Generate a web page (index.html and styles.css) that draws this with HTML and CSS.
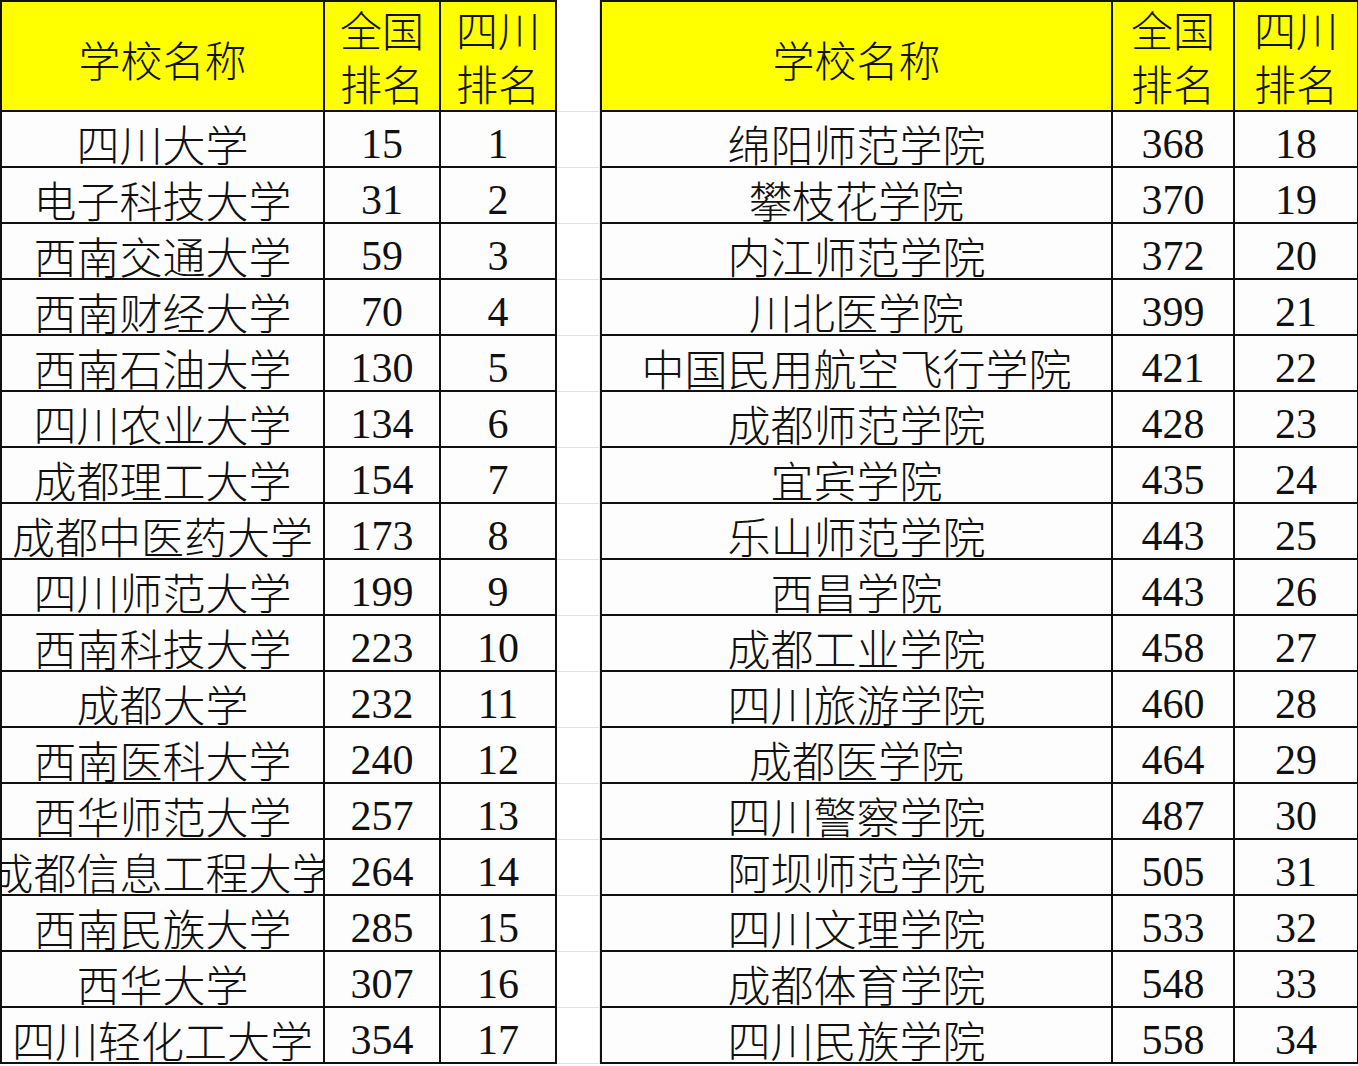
FILE: index.html
```html
<!DOCTYPE html>
<html lang="zh-CN">
<head>
<meta charset="utf-8">
<title>四川高校排名</title>
<link rel="stylesheet" href="styles.css">
</head>
<body>
<div class="page">
  <div class="sheet left">
    <div class="cell head name">学校名称</div>
    <div class="cell head two">全国<br>排名</div>
    <div class="cell head two">四川<br>排名</div>

    <div class="cell name">四川大学</div><div class="cell num">15</div><div class="cell num">1</div>
    <div class="cell name">电子科技大学</div><div class="cell num">31</div><div class="cell num">2</div>
    <div class="cell name">西南交通大学</div><div class="cell num">59</div><div class="cell num">3</div>
    <div class="cell name">西南财经大学</div><div class="cell num">70</div><div class="cell num">4</div>
    <div class="cell name">西南石油大学</div><div class="cell num">130</div><div class="cell num">5</div>
    <div class="cell name">四川农业大学</div><div class="cell num">134</div><div class="cell num">6</div>
    <div class="cell name">成都理工大学</div><div class="cell num">154</div><div class="cell num">7</div>
    <div class="cell name">成都中医药大学</div><div class="cell num">173</div><div class="cell num">8</div>
    <div class="cell name">四川师范大学</div><div class="cell num">199</div><div class="cell num">9</div>
    <div class="cell name">西南科技大学</div><div class="cell num">223</div><div class="cell num">10</div>
    <div class="cell name">成都大学</div><div class="cell num">232</div><div class="cell num">11</div>
    <div class="cell name">西南医科大学</div><div class="cell num">240</div><div class="cell num">12</div>
    <div class="cell name">西华师范大学</div><div class="cell num">257</div><div class="cell num">13</div>
    <div class="cell name clip">成都信息工程大学</div><div class="cell num">264</div><div class="cell num">14</div>
    <div class="cell name">西南民族大学</div><div class="cell num">285</div><div class="cell num">15</div>
    <div class="cell name">西华大学</div><div class="cell num">307</div><div class="cell num">16</div>
    <div class="cell name">四川轻化工大学</div><div class="cell num">354</div><div class="cell num">17</div>
  </div>

  <div class="gap">
    <div class="gcell"></div>
    <div class="gcell"></div><div class="gcell"></div><div class="gcell"></div><div class="gcell"></div>
    <div class="gcell"></div><div class="gcell"></div><div class="gcell"></div><div class="gcell"></div>
    <div class="gcell"></div><div class="gcell"></div><div class="gcell"></div><div class="gcell"></div>
    <div class="gcell"></div><div class="gcell"></div><div class="gcell"></div><div class="gcell"></div>
    <div class="gcell"></div>
  </div>

  <div class="sheet right">
    <div class="cell head name">学校名称</div>
    <div class="cell head two">全国<br>排名</div>
    <div class="cell head two">四川<br>排名</div>

    <div class="cell name">绵阳师范学院</div><div class="cell num">368</div><div class="cell num">18</div>
    <div class="cell name">攀枝花学院</div><div class="cell num">370</div><div class="cell num">19</div>
    <div class="cell name">内江师范学院</div><div class="cell num">372</div><div class="cell num">20</div>
    <div class="cell name">川北医学院</div><div class="cell num">399</div><div class="cell num">21</div>
    <div class="cell name">中国民用航空飞行学院</div><div class="cell num">421</div><div class="cell num">22</div>
    <div class="cell name">成都师范学院</div><div class="cell num">428</div><div class="cell num">23</div>
    <div class="cell name">宜宾学院</div><div class="cell num">435</div><div class="cell num">24</div>
    <div class="cell name">乐山师范学院</div><div class="cell num">443</div><div class="cell num">25</div>
    <div class="cell name">西昌学院</div><div class="cell num">443</div><div class="cell num">26</div>
    <div class="cell name">成都工业学院</div><div class="cell num">458</div><div class="cell num">27</div>
    <div class="cell name">四川旅游学院</div><div class="cell num">460</div><div class="cell num">28</div>
    <div class="cell name">成都医学院</div><div class="cell num">464</div><div class="cell num">29</div>
    <div class="cell name">四川警察学院</div><div class="cell num">487</div><div class="cell num">30</div>
    <div class="cell name">阿坝师范学院</div><div class="cell num">505</div><div class="cell num">31</div>
    <div class="cell name">四川文理学院</div><div class="cell num">533</div><div class="cell num">32</div>
    <div class="cell name">成都体育学院</div><div class="cell num">548</div><div class="cell num">33</div>
    <div class="cell name">四川民族学院</div><div class="cell num">558</div><div class="cell num">34</div>
  </div>
</div>
</body>
</html>
```

FILE: styles.css
```css
html, body {
  margin: 0;
  padding: 0;
  background: #ffffff;
  overflow: hidden;
}

.page {
  display: flex;
  width: 1400px;
  height: 1066px;
  align-items: flex-start;
}

.sheet {
  display: grid;
  grid-template-rows: 110px repeat(17, 56px);
  border-left: 2px solid #111;
  border-top: 2px solid #111;
  box-sizing: border-box;
  background: #fdfdfd;
}

.sheet.left {
  grid-template-columns: 323px 116px 116px;
}

.sheet.right {
  grid-template-columns: 511px 122px 124px;
}

.cell {
  border-right: 2px solid #111;
  border-bottom: 2px solid #111;
  display: flex;
  justify-content: center;
  align-items: center;
  white-space: nowrap;
  color: #111;
  min-width: 0;
  line-height: 1;
}

.clip {
  overflow: hidden;
}

.name {
  font-family: "Noto Sans CJK SC", "Noto Sans", sans-serif;
  font-weight: 300;
  font-size: 43px;
  padding-top: 8px;
}

.num {
  font-family: "Liberation Serif", "Times New Roman", serif;
  font-weight: 400;
  font-size: 42px;
  padding-top: 9px;
}

.head {
  background: #ffff00;
  font-family: "Noto Sans CJK SC", "Noto Sans", sans-serif;
  font-weight: 300;
  font-size: 42px;
  padding-top: 5px;
}

.two {
  line-height: 54px;
  text-align: center;
  padding-top: 0;
}

.gap {
  width: 43px;
  display: grid;
  grid-template-rows: 112px repeat(17, 56px);
  box-sizing: border-box;
}

.gcell {
  border-bottom: 1px solid #e2e2e2;
  border-right: 1px solid #e6e6e6;
  box-sizing: border-box;
}
```
